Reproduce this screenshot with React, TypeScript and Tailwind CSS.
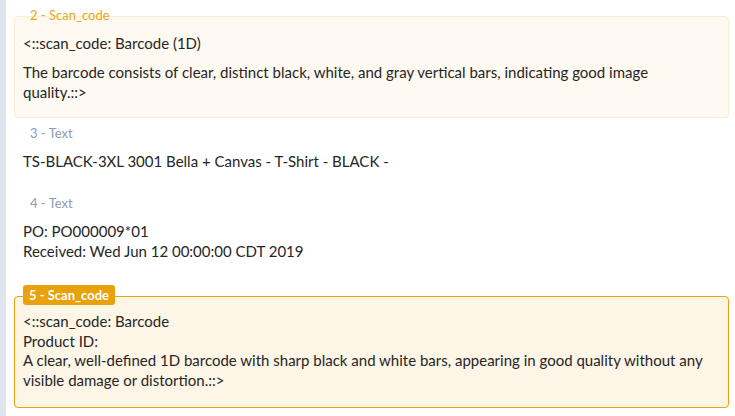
import React from "react";

export default function App() {
  return (
    <div
      className="flex w-[735px] h-[416px] overflow-hidden bg-white text-[#262626]"
      style={{ fontFamily: "Lato, 'Open Sans', sans-serif" }}
    >
      <div className="w-[6px] shrink-0 bg-[#dfe5ef]" />
      <div className="flex flex-col gap-[16px] pl-[8px] pr-[6px] pt-[16px] flex-1 text-[15px] leading-[20px]">
        {/* item 2 */}
        <div className="relative rounded-[4px] border border-[#fbecd3] bg-[#fef9f1] pl-[8px] pr-[16px] pt-[16px] pb-[15px]">
          <span className="absolute left-[14px] top-[-8px] px-[1px] text-[13px] leading-[13px] text-[#e9a51b]">
            2 - Scan_code
          </span>
          <p className="mb-[9px]">&lt;::scan_code: Barcode (1D)</p>
          <p>
            The barcode consists of clear, distinct black, white, and gray vertical bars, indicating good image
            quality.::&gt;
          </p>
        </div>
        {/* item 3 */}
        <div className="relative border border-transparent pl-[8px] pr-[16px] pt-[16px] pb-[16px]">
          <span className="absolute left-[14px] top-[-8px] px-[1px] text-[13px] leading-[13px] text-[#8e9cb4]">
            3 - Text
          </span>
          <p>TS-BLACK-3XL 3001 Bella + Canvas - T-Shirt - BLACK -</p>
        </div>
        {/* item 4 */}
        <div className="relative border border-transparent pl-[8px] pr-[16px] pt-[16px] pb-[18px]">
          <span className="absolute left-[14px] top-[-8px] px-[1px] text-[13px] leading-[13px] text-[#8e9cb4]">
            4 - Text
          </span>
          <p>
            PO: PO000009*01
            <br />
            Received: Wed Jun 12 00:00:00 CDT 2019
          </p>
        </div>
        {/* item 5 */}
        <div className="relative rounded-[4px] border border-[#e9a10c] bg-[#fdf5e6] pl-[8px] pr-[16px] pt-[15px] pb-[16px] leading-[19.7px]">
          <span className="absolute left-[8px] top-[-12px] rounded-[3px] bg-[#e9a10c] px-[6px] text-[13px] leading-[20px] font-bold text-white">
            5 - Scan_code
          </span>
          <p>
            &lt;::scan_code: Barcode
            <br />
            Product ID:
            <br />
            A clear, well-defined 1D barcode with sharp black and white bars, appearing in good quality without any
            visible damage or distortion.::&gt;
          </p>
        </div>
      </div>
    </div>
  );
}
